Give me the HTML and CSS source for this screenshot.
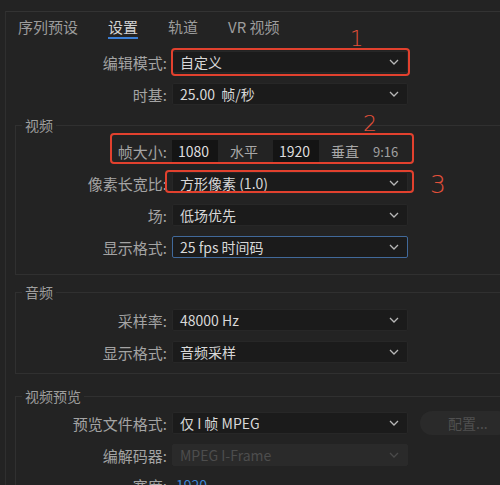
FILE: index.html
```html
<!DOCTYPE html>
<html lang="zh-CN">
<head>
<meta charset="utf-8">
<title>序列设置</title>
<link rel="stylesheet" href="styles.css">
</head>
<body>
<div class="panel">
  <div class="tabs">
    <div class="tab">序列预设</div>
    <div class="tab active">设置</div>
    <div class="tab">轨道</div>
    <div class="tab">VR 视频</div>
  </div>

  <div class="row top">
    <div class="label">编辑模式:</div>
    <div class="select"><span>自定义</span><svg class="chev" viewBox="0 0 10 6"><path d="M1 1 L5 5 L9 1"/></svg></div>
  </div>
  <div class="row top">
    <div class="label">时基:</div>
    <div class="select"><span>25.00&nbsp; 帧/秒</span><svg class="chev" viewBox="0 0 10 6"><path d="M1 1 L5 5 L9 1"/></svg></div>
  </div>

  <fieldset class="group video">
    <legend>视频</legend>
    <div class="row">
      <div class="label">帧大小:</div>
      <div class="frame">
        <div class="num">1080</div>
        <span class="unit u1">水平</span>
        <div class="num n2">1920</div>
        <span class="unit u2">垂直</span>
        <span class="ratio">9:16</span>
      </div>
    </div>
    <div class="row">
      <div class="label">像素长宽比:</div>
      <div class="select"><span>方形像素 (1.0)</span><svg class="chev" viewBox="0 0 10 6"><path d="M1 1 L5 5 L9 1"/></svg></div>
    </div>
    <div class="row">
      <div class="label">场:</div>
      <div class="select"><span>低场优先</span><svg class="chev" viewBox="0 0 10 6"><path d="M1 1 L5 5 L9 1"/></svg></div>
    </div>
    <div class="row">
      <div class="label">显示格式:</div>
      <div class="select focus"><span>25 fps 时间码</span><svg class="chev" viewBox="0 0 10 6"><path d="M1 1 L5 5 L9 1"/></svg></div>
    </div>
  </fieldset>

  <fieldset class="group audio">
    <legend>音频</legend>
    <div class="row">
      <div class="label">采样率:</div>
      <div class="select"><span>48000 Hz</span><svg class="chev" viewBox="0 0 10 6"><path d="M1 1 L5 5 L9 1"/></svg></div>
    </div>
    <div class="row">
      <div class="label">显示格式:</div>
      <div class="select"><span>音频采样</span><svg class="chev" viewBox="0 0 10 6"><path d="M1 1 L5 5 L9 1"/></svg></div>
    </div>
  </fieldset>

  <fieldset class="group preview">
    <legend>视频预览</legend>
    <div class="row">
      <div class="label">预览文件格式:</div>
      <div class="select"><span>仅 I 帧 MPEG</span><svg class="chev" viewBox="0 0 10 6"><path d="M1 1 L5 5 L9 1"/></svg></div>
      <div class="btn">配置...</div>
    </div>
    <div class="row">
      <div class="label">编解码器:</div>
      <div class="select disabled"><span>MPEG I-Frame</span><svg class="chev" viewBox="0 0 10 6"><path d="M1 1 L5 5 L9 1"/></svg></div>
    </div>
    <div class="row last">
      <div class="label">宽度:</div>
      <div class="hot">1920</div>
    </div>
  </fieldset>
</div>

<div class="mark box1"></div>
<div class="mark box2"></div>
<div class="mark box3"></div>
<div class="anno a1">1</div>
<div class="anno a2">2</div>
<div class="anno a3">3</div>
</body>
</html>
```

FILE: styles.css
```css
html, body {
  margin: 0;
  padding: 0;
}
body {
  width: 500px;
  height: 485px;
  overflow: hidden;
  position: relative;
  background: #232323;
  font-family: "Noto Sans CJK SC", "Noto Sans", sans-serif;
  color: #a6a6a6;
}
.panel {
  margin: 11px 0 0 5px;
  width: 560px;
  border-left: 1px solid #2f2f2f;
  border-top: 1px solid #333333;
}
.tabs {
  display: flex;
  gap: 30px;
  padding: 5px 0 0 12px;
  margin-bottom: 7px;
}
.tab {
  font-size: 15px;
  line-height: 20px;
  color: #9c9c9c;
  border-bottom: 2px solid transparent;
}
.tab.active {
  color: #d2d2d2;
  border-bottom-color: #3b7fd6;
}
.row {
  display: flex;
  align-items: center;
  height: 32px;
}
.label {
  width: 151px;
  flex: none;
  text-align: right;
  font-size: 15px;
  color: #a4a4a4;
  margin-right: 5px;
  white-space: nowrap;
}
.row.top .label {
  width: 161px;
}
.select {
  width: 236px;
  height: 22px;
  box-sizing: border-box;
  flex: none;
  display: flex;
  align-items: center;
  background: #1b1b1b;
  border: 1px solid #272727;
  border-radius: 2px;
  padding: 0 8px 0 7px;
  font-size: 14px;
  color: #d8d8d8;
  white-space: nowrap;
}
.select span {
  flex: 1;
}
.select.focus {
  border-color: #41699a;
}
.select.disabled {
  background: #2a2a2a;
  border-color: #2a2a2a;
  color: #4d4d4d;
}
.chev {
  width: 10px;
  height: 6px;
  fill: none;
  stroke: #b8b8b8;
  stroke-width: 1.3;
}
.select.disabled .chev {
  stroke: #4a4a4a;
}
.group {
  margin: 0 0 0 9px;
  padding: 0;
  border: 1px solid #303030;
  border-right: none;
  min-width: 0;
}
.group legend {
  margin-left: 6px;
  padding: 0 3px;
  font-size: 14px;
  line-height: 20px;
  color: #9e9e9e;
}
.video {
  margin-top: 5px;
  padding-bottom: 11px;
}
.audio {
  margin-top: 7px;
  padding-top: 2px;
  padding-bottom: 5px;
}
.preview {
  margin-top: 12px;
  padding-top: 1px;
}
.row.last {
  align-items: flex-start;
  padding-top: 4px;
  box-sizing: border-box;
}
.frame {
  display: flex;
  align-items: center;
  font-size: 14px;
  color: #a8a8a8;
}
.num {
  width: 46px;
  height: 22px;
  box-sizing: border-box;
  background: #141414;
  padding-left: 6px;
  line-height: 22px;
  color: #dedede;
}
.unit.u1 { margin-left: 12px; }
.num.n2 { margin-left: 15px; }
.unit.u2 { margin-left: 12px; }
.ratio {
  margin-left: 14px;
  font-size: 13px;
  color: #a0a0a0;
}
.btn {
  margin-left: 12px;
  width: 90px;
  height: 24px;
  flex: none;
  border-radius: 12px;
  background: #2a2a2a;
  color: #505050;
  font-size: 14px;
  line-height: 24px;
  padding-left: 28px;
  box-sizing: border-box;
}
.hot {
  color: #3d86d4;
  font-size: 14px;
  padding-left: 4px;
}
.mark {
  position: absolute;
  border: 2px solid #e2412e;
  border-radius: 4px;
  box-sizing: border-box;
}
.box1 { left: 171px; top: 48px; width: 239px; height: 28px; }
.box2 { left: 110px; top: 133px; width: 304px; height: 31px; }
.box3 { left: 165px; top: 170px; width: 249px; height: 23px; }
.anno {
  position: absolute;
  font-family: "DejaVu Sans", sans-serif;
  font-weight: 200;
  color: #e4503a;
  line-height: 1;
}
.a1 { left: 350px; top: 29px; font-size: 21px; }
.a2 { left: 363px; top: 113px; font-size: 22px; }
.a3 { left: 430px; top: 172px; font-size: 25px; }
```
